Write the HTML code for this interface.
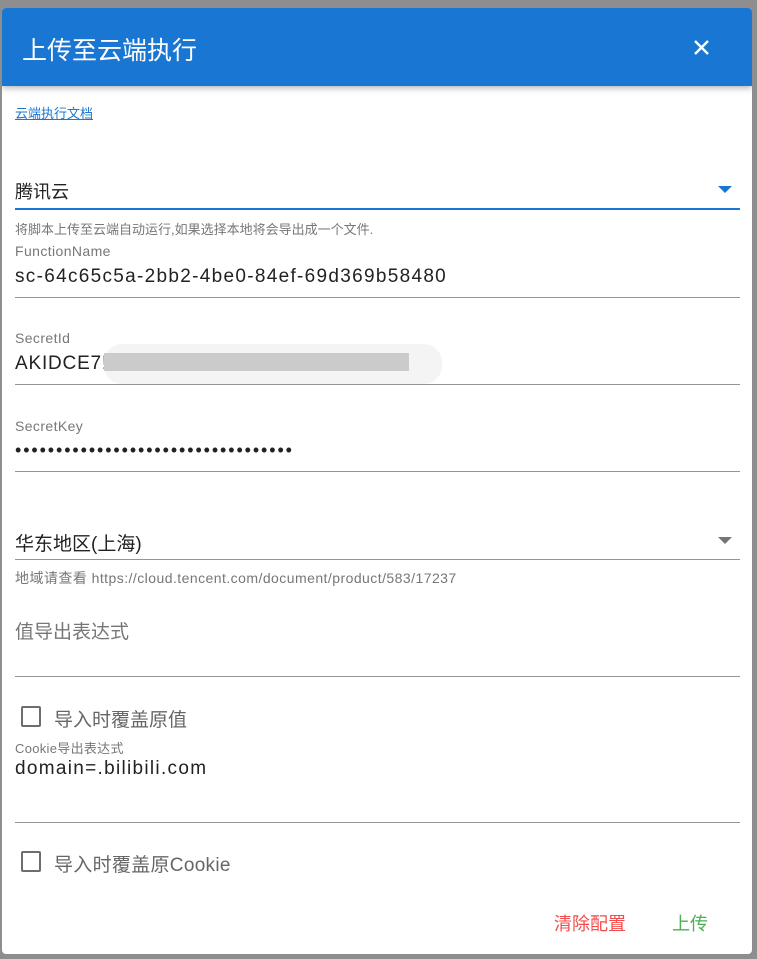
<!DOCTYPE html><html><head><meta charset="utf-8"><style>
*{margin:0;padding:0;box-sizing:border-box}
body{width:757px;height:959px;background:#8e8e8e;position:relative;overflow:hidden;font-family:"Liberation Sans","Noto Sans CJK SC",sans-serif}
.dlg{position:absolute;left:2px;top:8px;width:750px;height:946px;background:#fff;border-radius:4px;overflow:hidden}
.hd{position:absolute;left:0;top:0;width:750px;height:78px;background:#1976d2;box-shadow:0 2px 6px rgba(0,0,0,.3);color:#fff}
.t{position:absolute;font-size:15px;color:#222;white-space:nowrap}
.lbl{position:absolute;font-size:13px;color:#777;white-space:nowrap}
.ln{position:absolute;left:13px;width:725px;height:1px;background:#949494}
.cb{position:absolute;left:19px;width:20px;height:21px;border:2px solid #6d6d6d;border-radius:2px}
</style></head><body>
<div class="dlg">
<div class="hd"><div style="position:absolute;left:20px;top:23px;font-size:25px">上传至云端执行</div>
<svg style="position:absolute;left:691px;top:31px" width="17" height="17"><path d="M2 2L15 15M15 2L2 15" stroke="#fff" stroke-width="2.4"/></svg></div>
<div class="t" style="left:13px;top:95px;font-size:13px;color:#1976d2;text-decoration:underline">云端执行文档</div>
<div class="t" style="left:13px;top:170px;font-size:18px">腾讯云</div>
<svg style="position:absolute;left:716px;top:178px" width="14" height="8"><path d="M0 0H14L7 7Z" fill="#1976d2"/></svg>
<div style="position:absolute;left:13px;top:200px;width:725px;height:2px;background:#1976d2"></div>
<div class="lbl" style="left:13px;top:211px">将脚本上传至云端自动运行,如果选择本地将会导出成一个文件.</div>
<div class="lbl" style="left:13px;top:235px;font-size:14px;letter-spacing:.4px">FunctionName</div>
<div class="t" style="left:13px;top:258px;font-size:19px;letter-spacing:1.3px">sc-64c65c5a-2bb2-4be0-84ef-69d369b58480</div>
<div class="ln" style="top:289px"></div>
<div class="lbl" style="left:13px;top:322px;font-size:14px;letter-spacing:.4px">SecretId</div>
<div class="t" style="left:13px;top:345px;font-size:19px;letter-spacing:.8px">AKIDCE7!</div>
<div style="position:absolute;left:102px;top:336px;width:338px;height:40px;background:#f4f4f4;border-radius:18px"></div>
<div style="position:absolute;left:102px;top:345px;width:305px;height:18px;background:#cbcbcb"></div>
<div class="ln" style="top:376px"></div>
<div class="lbl" style="left:13px;top:410px;font-size:14px;letter-spacing:.4px">SecretKey</div>
<div class="t" style="left:13px;top:432px;font-size:18px;letter-spacing:1.9px">••••••••••••••••••••••••••••••••••</div>
<div class="ln" style="top:463px"></div>
<div class="t" style="left:13px;top:521px;font-size:19px">华东地区(上海)</div>
<svg style="position:absolute;left:716px;top:529px" width="14" height="8"><path d="M0 0H14L7 7Z" fill="#757575"/></svg>
<div class="ln" style="top:551px"></div>
<div class="lbl" style="left:13px;top:560px;font-size:14px;letter-spacing:.45px">地域请查看 https://cloud.tencent.com/document/product/583/17237</div>
<div class="t" style="left:13px;top:609px;font-size:19px;color:#777">值导出表达式</div>
<div class="ln" style="top:668px"></div>
<div class="cb" style="top:698px"></div>
<div class="t" style="left:52px;top:697px;font-size:19px;color:#666">导入时覆盖原值</div>
<div class="lbl" style="left:13px;top:730px;font-size:13px;letter-spacing:.3px">Cookie导出表达式</div>
<div class="t" style="left:13px;top:750px;font-size:19px;letter-spacing:1.3px">domain=.bilibili.com</div>
<div class="ln" style="top:814px"></div>
<div class="cb" style="top:843px"></div>
<div class="t" style="left:52px;top:842px;font-size:19px;color:#666;letter-spacing:.3px">导入时覆盖原Cookie</div>
<div class="t" style="left:552px;top:902px;font-size:18px;color:#f44c4c">清除配置</div>
<div class="t" style="left:670px;top:902px;font-size:18px;color:#4caf50">上传</div>
</div>
</body></html>
